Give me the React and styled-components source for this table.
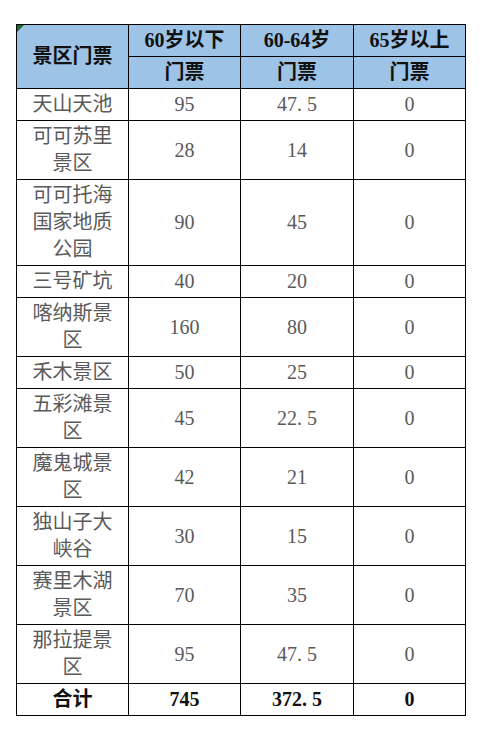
import React from "react";
import styled, { createGlobalStyle } from "styled-components";

const rows = [
  ["天山天池", "95", "47.5", "0"],
  ["可可苏里景区", "28", "14", "0"],
  ["可可托海国家地质公园", "90", "45", "0"],
  ["三号矿坑", "40", "20", "0"],
  ["喀纳斯景区", "160", "80", "0"],
  ["禾木景区", "50", "25", "0"],
  ["五彩滩景区", "45", "22.5", "0"],
  ["魔鬼城景区", "42", "21", "0"],
  ["独山子大峡谷", "30", "15", "0"],
  ["赛里木湖景区", "70", "35", "0"],
  ["那拉提景区", "95", "47.5", "0"],
];

const GlobalStyle = createGlobalStyle`
  html, body {
    margin: 0;
    padding: 0;
    background: #ffffff;
  }
  body {
    font-family: "Liberation Serif", "Noto Sans CJK SC", serif;
  }
`;

const Page = styled.div`
  padding: 24px 0 0 16px;
`;

const Table = styled.table`
  border-collapse: collapse;
  table-layout: fixed;
  width: 449px;
`;

const Cell = styled.td`
  position: relative;
  border: 1px solid #000;
  padding: 2px 8px;
  text-align: center;
  vertical-align: middle;
  font-size: 20px;
  line-height: 27px;
  font-family: "Liberation Serif", "Noto Sans CJK SC", serif;
  color: ${(p) => (p.$strong ? "#111" : "#5a5a5a")};
  font-weight: ${(p) => (p.$strong ? 700 : 400)};
  background: ${(p) => (p.$head ? "#9dc3e6" : "#ffffff")};
`;

const Corner = styled.span`
  position: absolute;
  top: 0;
  left: 0;
  width: 0;
  height: 0;
  border-top: 7px solid #1d6b2c;
  border-right: 7px solid transparent;
`;

const Dot = styled.span`
  display: inline-block;
  width: 10px;
  text-align: left;
`;

function Num({ value }) {
  const [a, b] = value.split(".");
  if (b === undefined) return <>{a}</>;
  return (
    <>
      {a}
      <Dot>.</Dot>
      {b}
    </>
  );
}

export default function App() {
  return (
    <Page>
      <GlobalStyle />
      <Table>
        <colgroup>
          <col style={{ width: 112 }} />
          <col style={{ width: 112 }} />
          <col style={{ width: 113 }} />
          <col style={{ width: 112 }} />
        </colgroup>
        <thead>
          <tr>
            <Cell as="th" rowSpan={2} $head $strong>
              <Corner />
              景区门票
            </Cell>
            <Cell as="th" $head $strong>60岁以下</Cell>
            <Cell as="th" $head $strong>60-64岁</Cell>
            <Cell as="th" $head $strong>65岁以上</Cell>
          </tr>
          <tr>
            <Cell as="th" $head $strong>门票</Cell>
            <Cell as="th" $head $strong>门票</Cell>
            <Cell as="th" $head $strong>门票</Cell>
          </tr>
        </thead>
        <tbody>
          {rows.map(([name, a, b, c]) => (
            <tr key={name}>
              <Cell>{name}</Cell>
              <Cell><Num value={a} /></Cell>
              <Cell><Num value={b} /></Cell>
              <Cell><Num value={c} /></Cell>
            </tr>
          ))}
          <tr>
            <Cell $strong>合计</Cell>
            <Cell $strong>745</Cell>
            <Cell $strong><Num value="372.5" /></Cell>
            <Cell $strong>0</Cell>
          </tr>
        </tbody>
      </Table>
    </Page>
  );
}
